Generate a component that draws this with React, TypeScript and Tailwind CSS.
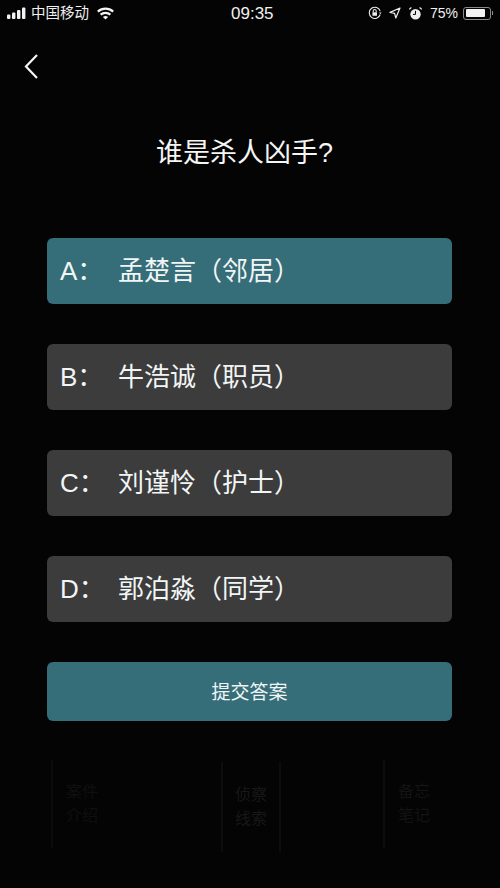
const font = { fontFamily: '"Liberation Sans","Noto Sans CJK SC",sans-serif' };

function Signal() {
  return (
    <svg width="20" height="12" viewBox="0 0 20 12" fill="#f2f2f2">
      <rect x="0" y="7.5" width="3.4" height="4.5" rx="1" />
      <rect x="5" y="5.5" width="3.4" height="6.5" rx="1" />
      <rect x="10" y="3" width="3.4" height="9" rx="1" />
      <rect x="15" y="0.5" width="3.4" height="11.5" rx="1" />
    </svg>
  );
}

function Wifi() {
  return (
    <svg width="17" height="13" viewBox="0 0 17 13" fill="none" stroke="#f5f5f5" strokeWidth="2.2">
      <path d="M0.8 4.6C5.2 0.6 11.8 0.6 16.2 4.6" />
      <path d="M3.6 7.6C6.4 5.2 10.6 5.2 13.4 7.6" />
      <path d="M8.5 12.6L5.9 9.9C7.4 8.8 9.6 8.8 11.1 9.9Z" fill="#f5f5f5" stroke="none" />
    </svg>
  );
}

function OrientationLock() {
  return (
    <svg width="14" height="14" viewBox="0 0 14 14" fill="none" stroke="#eeeeee" strokeWidth="1.1">
      <path d="M12.2 8.5A5.6 5.6 0 1 1 12.2 5.2" />
      <path d="M10.9 6.4h2.8l-1.4 1.7z" fill="#eeeeee" stroke="none" />
      <rect x="4.4" y="6.2" width="4.6" height="3.6" rx="0.5" fill="#eeeeee" stroke="none" />
      <path d="M5.2 6.2V5a1.5 1.5 0 0 1 3 0v1.2" />
    </svg>
  );
}

function Location() {
  return (
    <svg width="12" height="12" viewBox="0 0 12 12" fill="none" stroke="#eeeeee" strokeWidth="1.2" strokeLinejoin="round">
      <path d="M11 1L1 5.4L5.6 6.4L6.8 11Z" />
    </svg>
  );
}

function Alarm() {
  return (
    <svg width="13" height="13" viewBox="0 0 13 13" fill="#eeeeee">
      <circle cx="6.5" cy="7.2" r="5.2" />
      <path d="M6.5 3.8V7.4H4" stroke="#000" strokeWidth="1" fill="none" />
      <path d="M0.4 3L3 0.8L1.6 0.3L0.2 1.6Z" />
      <path d="M12.6 3L10 0.8L11.4 0.3L12.8 1.6Z" />
    </svg>
  );
}

function Battery() {
  return (
    <div className="flex items-center">
      <div className="flex h-[13px] w-[28px] items-center rounded-[3px] border border-[#8a8a8a] p-[1.5px]">
        <div className="h-full w-[19px] rounded-[1px] bg-[#f4f4f4]" />
      </div>
      <div className="ml-[1px] h-[4px] w-[1px] bg-[#8a8a8a]" />
    </div>
  );
}

function Option({ letter, text, active }: { letter: string; text: string; active?: boolean }) {
  return (
    <div
      className={
        "flex h-[66px] items-center rounded-[6px] pl-[13px] text-[26px] text-[#f2f5f5] " +
        (active ? "bg-[#356d78]" : "bg-[#3c3c3c]")
      }
    >
      <span className="w-[58px] shrink-0">{letter}：</span>
      <span>{text}</span>
    </div>
  );
}

function Ghost({ lines, cls }: { lines: string[]; cls: string }) {
  return (
    <div className={"absolute flex w-[60px] flex-col items-center justify-center text-[16px] leading-[24px] " + cls}>
      {lines.map((l) => (
        <span key={l}>{l}</span>
      ))}
    </div>
  );
}

export default function App() {
  return (
    <div style={font} className="relative h-[888px] w-[500px] overflow-hidden bg-[#040404] text-white">
      <Ghost lines={["案件", "介绍"]} cls="left-[51px] top-[760px] h-[88px] border-l-2 border-[#0c0c0c] text-[#0f0f0f]" />
      <Ghost lines={["侦察", "线索"]} cls="left-[221px] top-[762px] h-[90px] border-x-2 border-[#0d0d0d] text-[#171717]" />
      <Ghost lines={["备忘", "笔记"]} cls="left-[383px] top-[760px] h-[88px] border-l-2 border-[#0c0c0c] text-[#131313]" />

      <div className="relative flex h-[26px] items-center justify-between pl-[7px] pr-[7px] text-[#f0f0f0]">
        <div className="flex items-center gap-[5px]">
          <Signal />
          <span className="-ml-[1px] text-[14.5px] leading-none">中国移动</span>
          <span className="ml-[3px]"><Wifi /></span>
        </div>
        <span className="absolute left-[231px] text-[17px] leading-none">09:35</span>
        <div className="flex items-center">
          <OrientationLock />
          <span className="ml-[7px]"><Location /></span>
          <span className="ml-[8px]"><Alarm /></span>
          <span className="ml-[8px] text-[14px] leading-none">75%</span>
          <span className="ml-[5px]"><Battery /></span>
        </div>
      </div>

      <div className="relative flex h-[66px] items-center pl-[24px] pt-[14px]">
        <svg width="14" height="25" viewBox="0 0 14 25" fill="none" stroke="#f5f5f5" strokeWidth="2.2">
          <path d="M13 1L2 12.5L13 24" />
        </svg>
      </div>

      <h1 className="relative mt-[42px] pr-[11px] text-center text-[27px] font-normal leading-[38px] text-[#f5f5f5]">谁是杀人凶手?</h1>

      <div className="relative mx-[47px] mt-[66px] flex w-[405px] flex-col gap-[40px]">
        <Option letter="A" text="孟楚言（邻居）" active />
        <Option letter="B" text="牛浩诚（职员）" />
        <Option letter="C" text="刘谨怜（护士）" />
        <Option letter="D" text="郭泊淼（同学）" />
        <div className="flex h-[59px] items-center justify-center rounded-[6px] bg-[#356d78] pt-[3px] text-[19px] text-[#f2f5f5]">
          提交答案
        </div>
      </div>
    </div>
  );
}
